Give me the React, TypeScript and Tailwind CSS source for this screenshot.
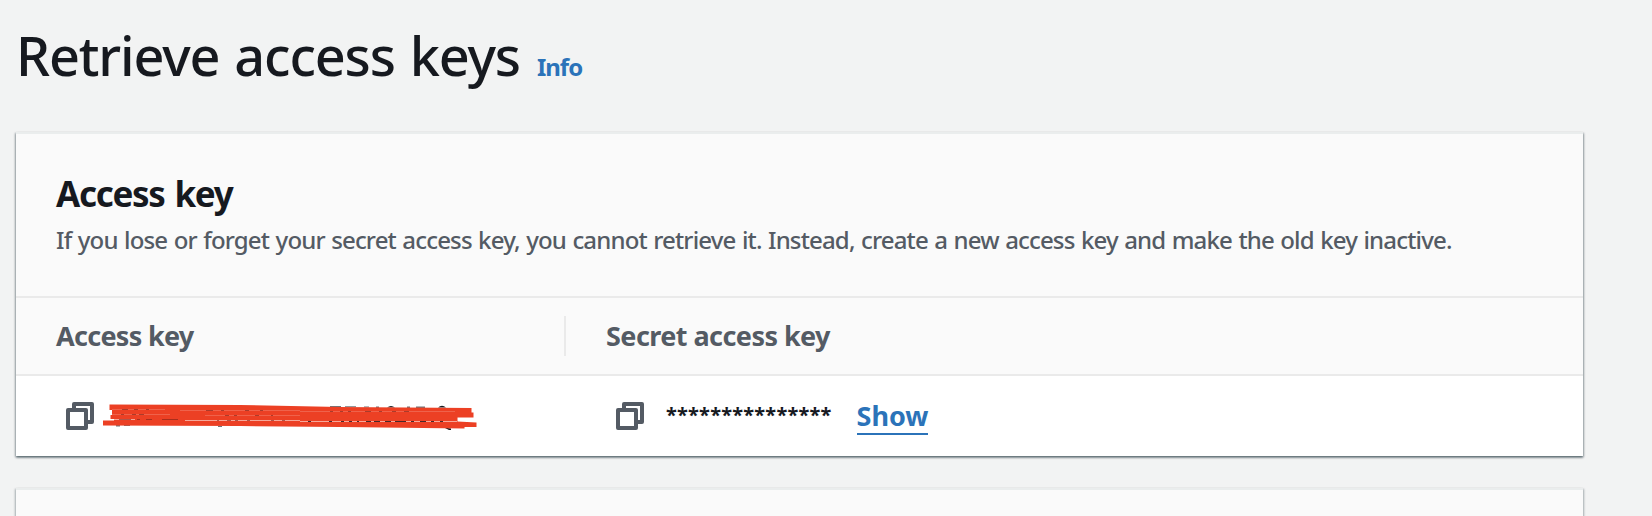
import React from "react";

function CopyIcon() {
  return (
    <svg width="28" height="28" viewBox="0 0 28 28" fill="none" stroke="#545b64" strokeWidth="4" strokeLinejoin="round" className="block shrink-0">
      <path d="M8 8V2H26V20H20" />
      <rect x="2" y="8" width="18" height="18" />
    </svg>
  );
}

function Redaction() {
  return (
    <svg width="380" height="28" viewBox="100 402 380 28" className="block shrink-0">
      <g fill="#16191f">
        <path d="M387 407.500q4-3 8 0zM438 407.500q4-3.500 8 0z" />
        <path opacity=".6" d="M407 406.500h3v1.500h-3zM416 406.500h9v1.500h-9zM376 406.500h3v1.500h-3zM364 406.500h5v1h-5zM330 406h11v1h-11zM345 406.300h11v1h-11z" />
        <path d="M444 427.500l7 1v2.500z" />
        <path opacity=".6" d="M116 425h4v1.500h-4zM124 425h6v1h-6zM218 426h4v1h-4z" />
      </g>
      <path
        fill="#ec4024"
        d="M109.500 404.500L240 405L340 407L471.500 408V412.500H473.500V417.500H457.500V421.500L476.500 422.500V427H464.500V428.500L340 427L240 426L103 425.500V420.500H114V419H110.500V415H112V410H109.500Z"
      />
      <g fill="none" stroke="#f7a294" strokeWidth="1" opacity=".35">
        <path d="M112 409.500H165M180 410.500H300M300 411.500H455" />
        <path d="M112 414.500H170M205 415.500H300" />
      </g>
      <path d="M114 419.500H135M185 420.500H300M300 421.500H457" fill="none" stroke="#fbd3cc" strokeWidth="1" opacity=".7" />
      <g fill="none" stroke="#7d2318" strokeWidth="1" opacity=".6">
        <path d="M122 409.500h6m6 0h4m8 0h3M206 410.500h7m8 0h3m21 0h4m11 0h3M330 411.500h3m7 0h3m5 0h3m14 0h6m8 0h3m10 0h4m8 0h5" />
        <path d="M121 414.500h3m8 0h4m3 0h5M225 415.500h4m5 0h3m18 0h4m12 0h2" />
        <path d="M119 419.500h12m6 0h3m6 0h6m10 0h16M217 420.500h2m8 0h4m4 0h3m9 0h3m21 0h3m8 0h3" />
      </g>
      <path fill="none" stroke="#2a1416" strokeWidth="1" opacity=".85" d="M308 421.500h3m18 0h3m9 0h3m5 0h3m5 0h2m7 0h5m3 0h6m5 0h6m4 0h11m5 0h3m6 0h6m5 0h3m6 0h3" />
    </svg>
  );
}

export default function App() {
  return (
    <div className="h-[516px] w-full overflow-hidden bg-[#f2f3f3] font-['Noto_Sans',sans-serif] text-[#16191f]">
      <header className="flex h-[132px] items-baseline pl-4 pt-[18px] leading-[74px]">
        <h1 className="whitespace-nowrap text-[54px] font-medium tracking-[-1.15px] [word-spacing:2px]">Retrieve access keys</h1>
        <a className="ml-[17px] text-[24px] font-bold tracking-[-1px] text-[#2b73b9]">Info</a>
      </header>
      <main className="flex w-[1583px] flex-col gap-8 pl-4">
        <section className="border-t-2 border-[#eaeded] bg-white shadow-[0_2px_2px_0_rgba(0,28,36,0.3),1px_1px_2px_0_rgba(0,28,36,0.3),-1px_1px_2px_0_rgba(0,28,36,0.3)]">
          <div className="h-[164px] border-b-2 border-[#eaeaea] bg-[#fafafa] pl-10 pt-9">
            <h2 className="whitespace-nowrap text-[35px] font-bold leading-[48px] tracking-[-1.3px] [word-spacing:2px]">Access key</h2>
            <p className="whitespace-nowrap text-[24px] font-medium leading-[44px] tracking-[-0.84px] text-[#545b64] [word-spacing:1px]">
              If you lose or forget your secret access key, you cannot retrieve it. Instead, create a new access key and make the old key inactive.
            </p>
          </div>
          <div className="flex h-[78px] items-center border-b-2 border-[#eaeaea] bg-[#fafafa] text-[27px] font-bold text-[#545b64]">
            <div className="flex h-10 w-[550px] items-center border-r-2 border-[#eaeaea] pl-10 tracking-[-0.7px]">Access key</div>
            <div className="pl-10 tracking-[-0.55px]">Secret access key</div>
          </div>
          <div className="flex h-20 items-center">
            <div className="flex w-[550px] items-center gap-[6px] pl-[50px]">
              <CopyIcon />
              <Redaction />
            </div>
            <div className="flex items-center pl-[50px]">
              <CopyIcon />
              <span className="ml-[22px] pb-[2px] text-[20px] font-bold leading-[36px] tracking-[0.2px]">***************</span>
              <a className="ml-[25px] border-b-2 border-[#2b73b9] pt-[2px] text-[27px] font-bold leading-[34px] text-[#2b73b9]">Show</a>
            </div>
          </div>
        </section>
        <section className="h-20 border-t-2 border-[#eaeded] bg-[#fafafa] shadow-[1px_1px_2px_0_rgba(0,28,36,0.3),-1px_1px_2px_0_rgba(0,28,36,0.3)]" />
      </main>
    </div>
  );
}
